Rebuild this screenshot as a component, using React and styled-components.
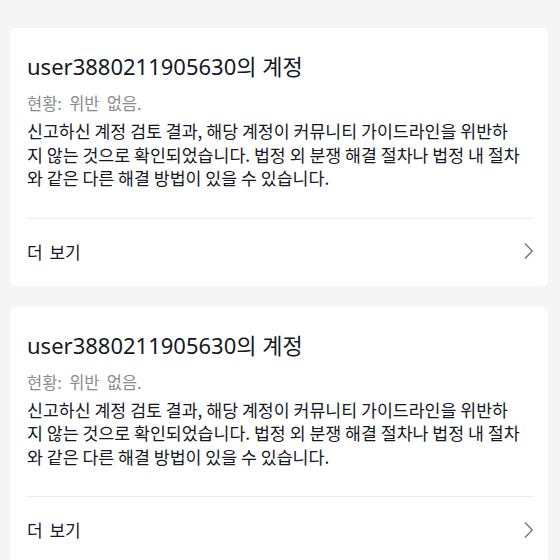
import React from 'react';
import styled, { createGlobalStyle } from 'styled-components';

const GlobalStyle = createGlobalStyle`
    html, body {
        margin: 0;
        padding: 0;
        background: #f5f5f5;
    }
    body {
        font-family: "Noto Sans", "Noto Sans CJK KR", sans-serif;
        -webkit-font-smoothing: antialiased;
    }
`;

const Page = styled.div`
    width: 560px;
    height: 560px;
    overflow: hidden;
    padding: 28px 12px 0 10px;
    box-sizing: border-box;
    display: flex;
    flex-direction: column;
    gap: 21px;
`;

const Card = styled.div`
    background: #FFF;
    border-radius: 6px;
    padding: 0 15px 0 17px;
    flex-shrink: 0;
`;

const CardBody = styled.div`
    padding: 23px 0 28px;
    border-bottom: 1px solid #ececec;
`;

const Title = styled.h3`
    margin: 0 0 10px;
    font-size: 22px;
    line-height: 30px;
    font-weight: 400;
    color: #161823;
`;

const Status = styled.div`
    margin-bottom: 4px;
    font-family: "Noto Sans CJK KR", sans-serif;
    font-size: 16.5px;
    line-height: 24px;
    word-spacing: 3.5px;
    color: #8a8b91;
`;

const Desc = styled.p`
    width: 495px;
    margin: 0;
    font-family: "Noto Sans CJK KR", sans-serif;
    font-size: 17.3px;
    line-height: 23.5px;
    word-break: break-all;
    color: #161823;
`;

const MoreRow = styled.div`
    height: 67px;
    padding-bottom: 2px;
    box-sizing: border-box;
    display: flex;
    align-items: center;
    justify-content: space-between;
    font-family: "Noto Sans CJK KR", sans-serif;
    font-size: 17px;
    word-spacing: 3px;
    color: #161823;
    cursor: pointer;
`;

const Chevron = () => (
    <svg width="12" height="18" viewBox="0 0 12 18">
        <path d="M4 1.5 L11.3 9 L4 16.5" fill="none" stroke="#7a7a7a" strokeWidth="1.5" />
    </svg>
);

const ReportCard = ({ user, status, text }) => (
    <Card>
        <CardBody>
            <Title>{user}의 계정</Title>
            <Status>현황: {status}</Status>
            <Desc>{text}</Desc>
        </CardBody>
        <MoreRow>
            <span>더 보기</span>
            <Chevron />
        </MoreRow>
    </Card>
);

const text = '신고하신 계정 검토 결과, 해당 계정이 커뮤니티 가이드라인을 위반하지 않는 것으로 확인되었습니다. 법정 외 분쟁 해결 절차나 법정 내 절차와 같은 다른 해결 방법이 있을 수 있습니다.';

export default function App() {
    return (
        <Page>
            <GlobalStyle />
            <ReportCard user="user3880211905630" status="위반 없음." text={text} />
            <ReportCard user="user3880211905630" status="위반 없음." text={text} />
        </Page>
    );
}
